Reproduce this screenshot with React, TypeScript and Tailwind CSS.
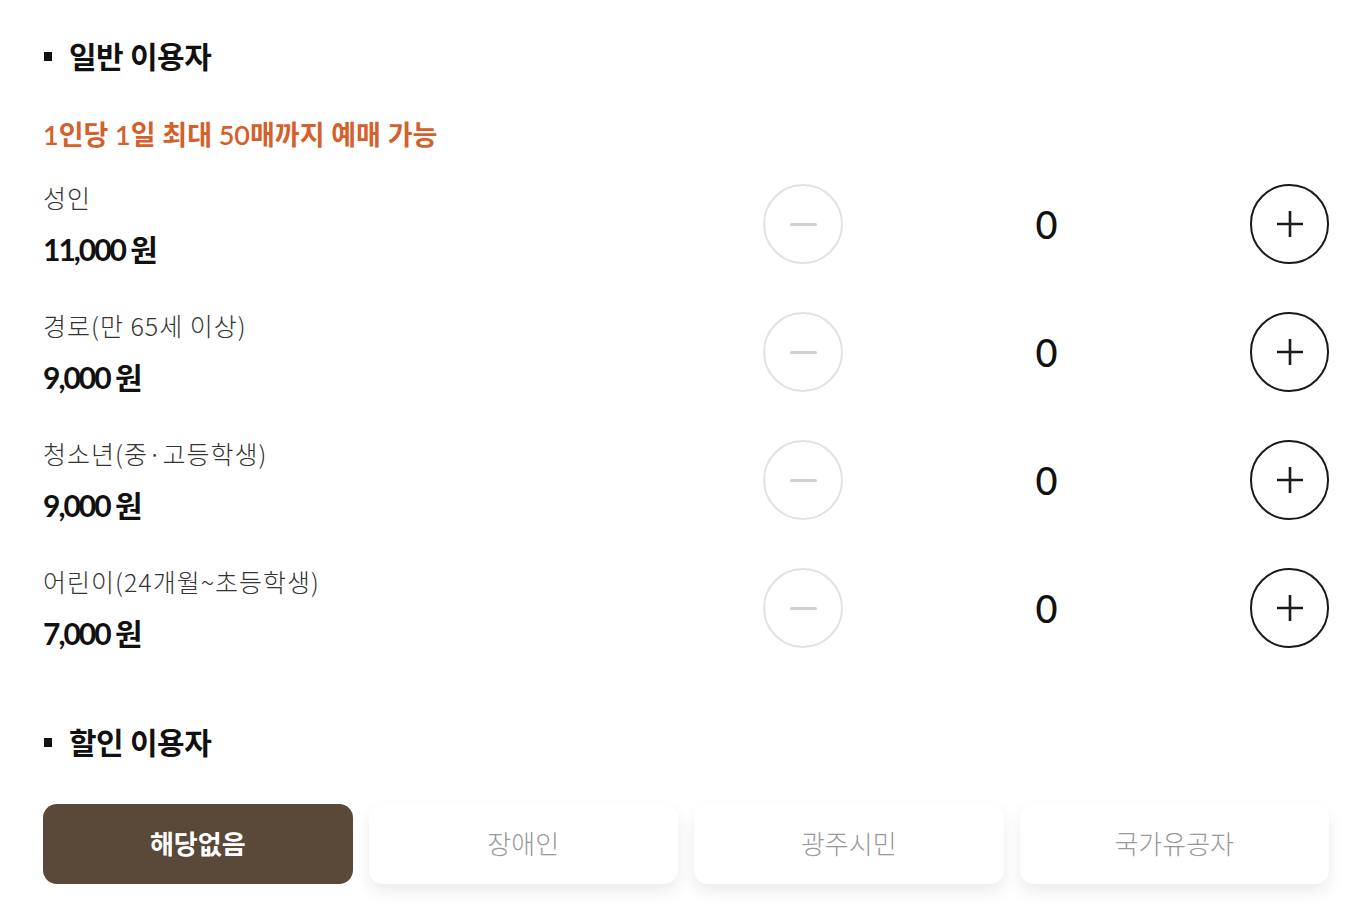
import React from "react";

const rows = [
  { label: "성인", price: "11,000 원" },
  { label: "경로(만 65세 이상)", price: "9,000 원" },
  { label: "청소년(중·고등학생)", price: "9,000 원" },
  { label: "어린이(24개월~초등학생)", price: "7,000 원" },
];

const font = { fontFamily: 'Lato, "Noto Sans CJK KR", sans-serif' };
const krFont = { fontFamily: '"Noto Sans CJK KR", sans-serif' };

function Heading({ children }: { children: React.ReactNode }) {
  return (
    <div className="flex items-center h-[40px]">
      <span className="w-[8px] h-[9px] bg-[#111] ml-[1px] mr-[17px]" />
      <span className="text-[30px] font-bold tracking-[-0.5px] text-[#111] leading-none">{children}</span>
    </div>
  );
}

export default function App() {
  return (
    <div className="w-[1359px] h-[922px] bg-white overflow-hidden" style={font}>
      <div className="pl-[43px] pr-[30px] pt-[36px]">
        <Heading>일반 이용자</Heading>
        <div className="mt-[40px] h-[36px] flex items-center text-[27px] font-semibold tracking-[0px] text-[#d4602b] leading-none">
          1인당 1일 최대 50매까지 예매 가능
        </div>
        <div className="mt-[32px] flex flex-col gap-[48px]">
          {rows.map((r) => (
            <div key={r.label} className="flex items-center h-[80px]">
              <div className="flex-1 flex flex-col">
                <div
                  className="text-[25px] font-light tracking-[1px] text-[#333] leading-none h-[30px] flex items-center -mt-[2px]"
                  style={krFont}
                >
                  {r.label}
                </div>
                <div className="mt-[21px] text-[30px] font-bold tracking-[-2px] text-[#111] leading-none h-[30px] flex items-center">
                  {r.price}
                </div>
              </div>
              <div className="w-[80px] h-[80px] rounded-full border-2 border-[#e2e2e2] flex items-center justify-center">
                <span className="w-[27px] h-[3px] bg-[#cfcfcf] rounded" />
              </div>
              <div className="w-[407px] text-center text-[38px] font-medium text-[#111] leading-none">0</div>
              <div className="w-[79px] h-[80px] rounded-full border-2 border-[#1a1a1a] flex items-center justify-center">
                <svg width="30" height="30" viewBox="0 0 30 30">
                  <path d="M15 2v26M2 15h26" stroke="#1a1a1a" strokeWidth="2.6" />
                </svg>
              </div>
            </div>
          ))}
        </div>
        <div className="mt-[74px]">
          <Heading>할인 이용자</Heading>
        </div>
        <div className="mt-[42px] grid grid-cols-4 gap-[16px]">
          <button className="h-[80px] rounded-[14px] bg-[#5a4838] text-white text-[26px] font-bold tracking-[0px]">
            해당없음
          </button>
          {["장애인", "광주시민", "국가유공자"].map((t) => (
            <button
              key={t}
              className="h-[80px] rounded-[14px] bg-white text-[#999] text-[26px] font-light tracking-[0px] shadow-[0_8px_16px_rgba(0,0,0,0.08)]"
            >
              {t}
            </button>
          ))}
        </div>
      </div>
    </div>
  );
}
